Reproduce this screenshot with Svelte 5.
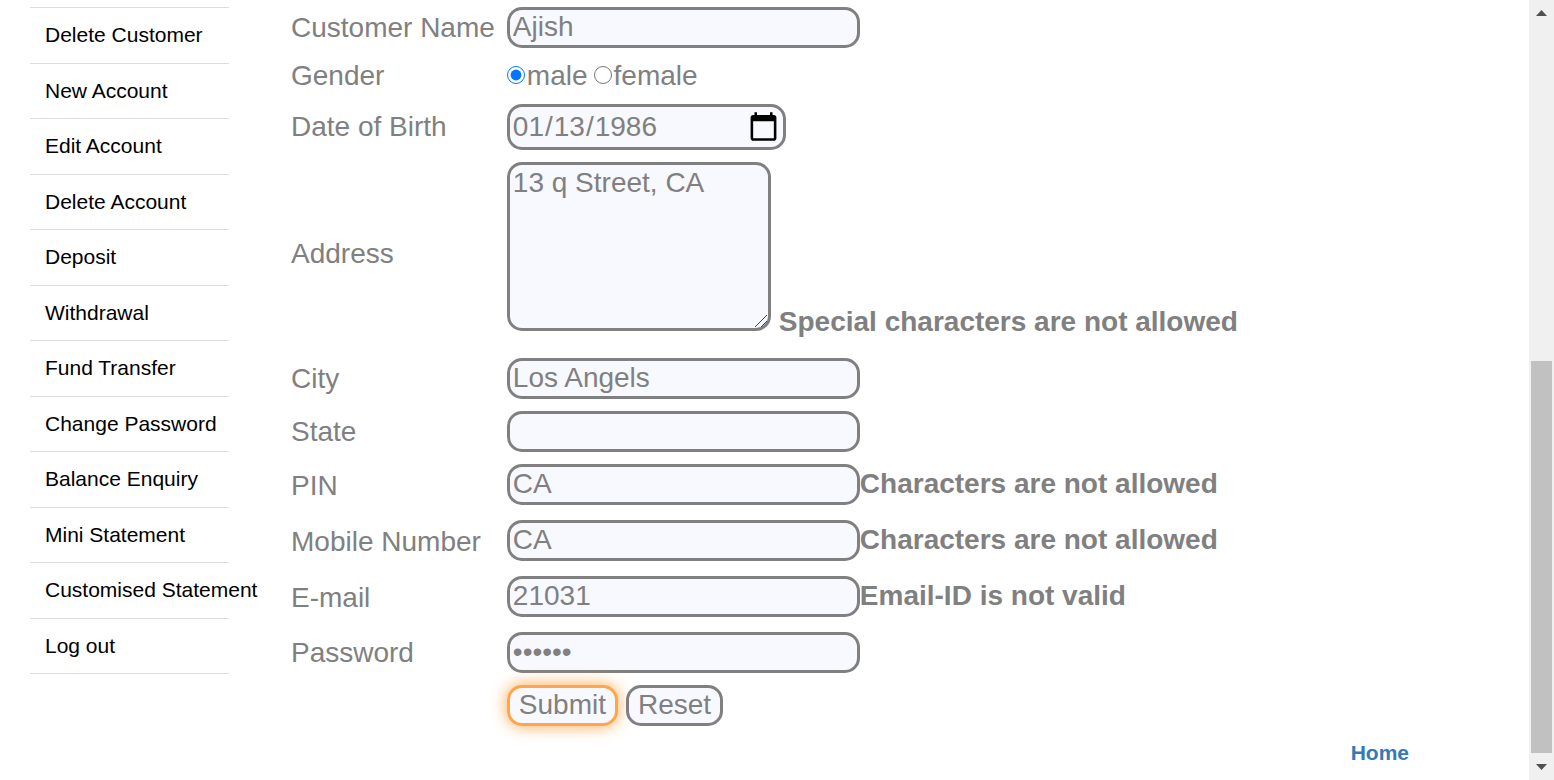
<script>
  const links = [
    'Delete Customer', 'New Account', 'Edit Account', 'Delete Account',
    'Deposit', 'Withdrawal', 'Fund Transfer', 'Change Password',
    'Balance Enquiry', 'Mini Statement', 'Customised Statement', 'Log out'
  ];

  const fields = [
    { id: 'city', label: 'City', type: 'text', value: 'Los Angels' },
    { id: 'state', label: 'State', type: 'text', value: '' },
    { id: 'pin', label: 'PIN', type: 'text', value: 'CA', error: 'Characters are not allowed' },
    { id: 'mobile', label: 'Mobile Number', type: 'text', value: 'CA', error: 'Characters are not allowed' },
    { id: 'email', label: 'E-mail', type: 'text', value: '21031', error: 'Email-ID is not valid' },
    { id: 'password', label: 'Password', type: 'password', value: 'secret' }
  ];

  let address = $state('13 q Street, CA');
</script>

<div class="page">
  <nav>
    <ul>
      {#each links as link}
        <li><a href="#top">{link}</a></li>
      {/each}
    </ul>
  </nav>

  <main>
    <form onsubmit={(e) => e.preventDefault()}>
      <table>
        <tbody>
          <tr>
            <td><label for="name">Customer Name</label></td>
            <td><div class="field"><input class="box" id="name" type="text" value="Ajish" /></div></td>
          </tr>
          <tr>
            <td>Gender</td>
            <td>
              <div class="radios">
                <label><input type="radio" name="gender" value="m" checked />male</label>
                <label><input type="radio" name="gender" value="f" />female</label>
              </div>
            </td>
          </tr>
          <tr>
            <td><label for="dob">Date of Birth</label></td>
            <td><div class="field"><input class="box date" id="dob" type="date" value="1986-01-13" /></div></td>
          </tr>
          <tr>
            <td><label for="address">Address</label></td>
            <td>
              <div class="field address">
                <textarea class="box" id="address" bind:value={address}></textarea>
                <strong>Special characters are not allowed</strong>
              </div>
            </td>
          </tr>
          {#each fields as f}
            <tr>
              <td><label for={f.id}>{f.label}</label></td>
              <td>
                <div class="field" class:invalid={f.error}>
                  <input class="box" id={f.id} type={f.type} value={f.value} />
                  {#if f.error}<strong>{f.error}</strong>{/if}
                </div>
              </td>
            </tr>
          {/each}
          <tr>
            <td></td>
            <td>
              <div class="field buttons">
                <button class="box submit" type="submit">Submit</button>
                <button class="box" type="reset">Reset</button>
              </div>
            </td>
          </tr>
        </tbody>
      </table>
    </form>
    <footer><a href="#home">Home</a></footer>
  </main>

  <div class="scrollbar" aria-hidden="true">
    <svg width="11" height="6" viewBox="0 0 11 6"><path d="M0 6 5.500 0 11 6Z" /></svg>
    <div class="track"><div class="thumb"></div></div>
    <svg width="11" height="6" viewBox="0 0 11 6"><path d="M0 0h11L5.500 6Z" /></svg>
  </div>
</div>

<style>
  :global(body) {
    background: #fff;
  }

  .page {
    display: flex;
    height: 100vh;
    overflow: hidden;
    font-family: "Liberation Sans", Arial, sans-serif;
    color: gray;
  }

  nav {
    flex: none;
    width: 199px;
    padding: 7px 56px 0 30px;
  }

  ul {
    list-style: none;
    margin: 0;
    padding: 0;
    border-top: 1px solid #ddd;
  }

  li {
    box-sizing: border-box;
    height: 55px;
    border-bottom: 1px solid #ddd;
  }

  li:nth-child(odd) {
    height: 56px;
  }

  li a {
    display: block;
    padding: 0 15px;
    font-size: 21px;
    line-height: 54px;
    color: #000;
    text-decoration: none;
    white-space: nowrap;
  }

  main {
    flex: 1;
    min-width: 0;
    padding-top: 1px;
  }

  table {
    border-collapse: collapse;
    font-size: 28px;
    line-height: 32px;
  }

  td {
    padding: 6px;
    vertical-align: middle;
    white-space: nowrap;
  }

  .field {
    display: flex;
    align-items: flex-start;
  }

  .invalid {
    min-height: 44px;
  }

  strong {
    line-height: 40px;
  }

  .address {
    align-items: flex-end;
    gap: 8px;
    padding-bottom: 15px;
  }

  .address strong {
    line-height: 18px;
  }

  .radios {
    display: flex;
    gap: 6px;
  }

  .radios label {
    display: flex;
    align-items: center;
  }

  .radios input {
    width: 18px;
    height: 18px;
    margin: 0 2px 2px 0;
  }

  .box {
    box-sizing: border-box;
    width: 353px;
    height: 41px;
    margin: 0;
    padding: 0 3px 2px;
    border: 3px solid gray;
    border-radius: 15px;
    background: #f8f8ff;
    color: gray;
    font: 28px "Liberation Sans", Arial, sans-serif;
    outline: none;
  }

  .date {
    width: 279px;
    height: 46px;
    padding: 0 3px 0 2px;
  }

  .date::-webkit-calendar-picker-indicator {
    width: 33px;
    height: 33px;
    padding: 0;
    background-size: contain;
  }

  textarea.box {
    width: 264px;
    height: 169px;
    padding: 2px 3px;
    resize: both;
  }

  textarea::-webkit-resizer {
    background: url("data:image/svg+xml,%3Csvg xmlns='http://www.w3.org/2000/svg' viewBox='0 0 15 15'%3E%3Cpath d='M2 14 14 2M8 14l6-6' stroke='%23444'/%3E%3C/svg%3E") no-repeat;
  }

  .buttons {
    gap: 8px;
  }

  button.box {
    width: auto;
    padding: 0 9px 2px;
  }

  .submit {
    border-color: #ffa64d;
    box-shadow: 0 0 16px #ffa64d;
  }

  footer {
    display: flex;
    justify-content: flex-end;
    padding: 9px 120px 0 0;
  }

  footer a {
    font-size: 21px;
    font-weight: bold;
    line-height: 24px;
    color: #337ab7;
    text-decoration: none;
  }

  .scrollbar {
    box-sizing: border-box;
    display: flex;
    flex-direction: column;
    align-items: center;
    gap: 11px;
    width: 25px;
    padding: 10px 2px;
    background: #f0f0f0;
  }

  .scrollbar svg {
    flex: none;
    fill: #505050;
  }

  .track {
    flex: 1;
    display: flex;
    align-items: flex-end;
    align-self: stretch;
  }

  .thumb {
    width: 100%;
    height: 54%;
    background: #c1c1c1;
  }
</style>
